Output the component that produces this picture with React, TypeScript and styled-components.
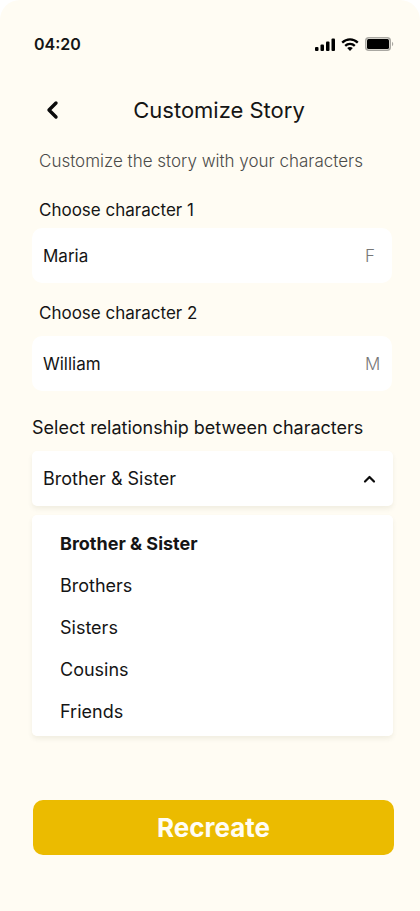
import React, { useState } from "react";
import styled, { createGlobalStyle } from "styled-components";

const GlobalStyle = createGlobalStyle`
  *, *::before, *::after { box-sizing: border-box; }
  body { margin: 0; background: #ffffff; }
  body, button, input, select { font-family: Inter, "Open Sans", sans-serif; color: #151515; }
`;

const Screen = styled.main`
  display: flex;
  flex-direction: column;
  min-height: 100vh;
  padding: 32px 26px 56px 32px;
  background: #fffcf3;
  border-radius: 20px 20px 0 0;
`;

const StatusBar = styled.div`
  display: flex;
  align-items: center;
  justify-content: space-between;
  height: 24px;
  padding-left: 2px;
`;

const Clock = styled.time`
  font-size: 16px;
  line-height: 24px;
  font-weight: 600;
`;

const StatusIcons = styled.div`
  display: flex;
  align-items: center;
  gap: 6px;
`;

const Header = styled.header`
  display: grid;
  grid-template-columns: 40px 1fr 28px;
  align-items: center;
  margin-top: 38px;
`;

const BackButton = styled.button`
  display: flex;
  align-items: center;
  justify-content: center;
  height: 32px;
  padding: 0;
  border: 0;
  background: none;
  cursor: pointer;
`;

const Title = styled.h1`
  margin: 0;
  font-size: 22px;
  line-height: 32px;
  font-weight: 400;
  text-align: center;
  white-space: nowrap;
`;

const Intro = styled.p`
  margin: 23px 0 0 7px;
  font-size: 17px;
  line-height: 24px;
  font-weight: 300;
  color: #4b4b49;
  white-space: nowrap;
`;

const Form = styled.form`
  display: flex;
  flex: 1;
  flex-direction: column;
  margin-top: 25px;
`;

const Field = styled.div<{ $gap: number }>`
  display: flex;
  flex-direction: column;
  gap: ${(p) => p.$gap}px;
  margin-bottom: 18px;
`;

const Relationship = styled(Field)`
  margin-top: 7px;
`;

const Label = styled.label<{ $inset?: boolean }>`
  padding-left: ${(p) => (p.$inset ? 7 : 0)}px;
  font-size: ${(p) => (p.$inset ? 17 : 18)}px;
  line-height: 24px;
  white-space: nowrap;
`;

const InputBox = styled.div`
  display: flex;
  align-items: center;
  height: 55px;
  margin-right: 2px;
  padding: 0 11px;
  background: #ffffff;
  border-radius: 10px;
`;

const NameInput = styled.input`
  flex: 1;
  min-width: 0;
  padding: 0;
  border: 0;
  background: none;
  font-size: 17px;
  line-height: 24px;
`;

const Gender = styled.span`
  width: 16px;
  font-size: 17px;
  line-height: 24px;
  font-weight: 300;
  color: #777777;
`;

const SelectBox = styled.div`
  display: grid;
  align-items: center;
  height: 55px;
  margin-right: 1px;
  background: #ffffff;
  border-radius: 5px;
  box-shadow: 0 3px 5px rgba(60, 50, 20, 0.07);

  > * { grid-area: 1 / 1; }
  > svg { justify-self: end; margin-right: 17px; pointer-events: none; }
`;

const Select = styled.select`
  appearance: none;
  width: 100%;
  height: 100%;
  padding: 0 40px 0 11px;
  border: 0;
  background: none;
  font-size: 18px;
`;

const Options = styled.fieldset`
  display: flex;
  flex-direction: column;
  min-width: 0;
  margin: -9px 1px 0 0;
  padding: 7px 28px 4px;
  border: 0;
  background: #ffffff;
  border-radius: 5px;
  box-shadow: 0 3px 5px rgba(60, 50, 20, 0.07);
`;

const Option = styled.label<{ $selected: boolean }>`
  display: flex;
  align-items: center;
  height: 42px;
  font-size: 18px;
  font-weight: ${(p) => (p.$selected ? 700 : 400)};
  cursor: pointer;
`;

const OptionRadio = styled.input`
  appearance: none;
  width: 0;
  height: 0;
  margin: 0;
`;

const Submit = styled.button`
  height: 55px;
  margin-top: auto;
  padding: 0;
  border: 0;
  border-radius: 10px;
  background: #ebbb00;
  color: #fffdf4;
  font-size: 26px;
  line-height: 32px;
  font-weight: 700;
  cursor: pointer;
  margin-left: 1px;
`;

const relationships = ["Brother & Sister", "Brothers", "Sisters", "Cousins", "Friends"];

const SignalIcon = () => (
  <svg width="20" height="13" viewBox="0 0 20 13" aria-hidden="true">
    <rect x="0" y="9" width="3.5" height="4" rx="1" />
    <rect x="5.5" y="6.5" width="3.5" height="6.5" rx="1" />
    <rect x="11" y="3.5" width="3.5" height="9.5" rx="1" />
    <rect x="16.5" y="0.5" width="3.5" height="12.5" rx="1" />
  </svg>
);

const WifiIcon = () => (
  <svg width="18" height="13" viewBox="0 0 18 13" aria-hidden="true">
    <path d="M1.2 4.6 C5.6 .3 12.4 .3 16.8 4.6 M4.2 7.8 C6.9 5.2 11.1 5.2 13.8 7.8" fill="none" stroke="#000" strokeWidth="2.3" />
    <path d="M6.2 10 C7.8 8.6 10.2 8.6 11.8 10 L9 12.9 Z" />
  </svg>
);

const BatteryIcon = () => (
  <svg width="29" height="14" viewBox="0 0 29 14" aria-hidden="true">
    <rect x="0.75" y="0.75" width="24.5" height="12.5" rx="3" fill="none" stroke="#aaa8a2" strokeWidth="1.5" />
    <rect x="2" y="2" width="22" height="10" rx="1.5" />
    <path d="M27 4.8 C28.7 5.5 28.7 8.5 27 9.2 Z" fill="#aaa8a2" />
  </svg>
);

interface CharacterFieldProps {
  id: string;
  label: string;
  name: string;
  gender: string;
  gap: number;
}

const CharacterField = ({ id, label, name, gender, gap }: CharacterFieldProps) => (
  <Field $gap={gap}>
    <Label htmlFor={id} $inset>{label}</Label>
    <InputBox>
      <NameInput id={id} type="text" defaultValue={name} />
      <Gender>{gender}</Gender>
    </InputBox>
  </Field>
);

export default function App() {
  const [relationship, setRelationship] = useState(relationships[0]);

  return (
    <>
      <GlobalStyle />
      <Screen>
        <StatusBar>
          <Clock>04:20</Clock>
          <StatusIcons>
            <SignalIcon />
            <WifiIcon />
            <BatteryIcon />
          </StatusIcons>
        </StatusBar>
        <Header>
          <BackButton type="button" aria-label="Back">
            <svg width="14" height="20" viewBox="0 0 14 20" fill="none" stroke="#0b0b0b" strokeWidth="3.4" strokeLinecap="round" strokeLinejoin="round">
              <path d="M11 3 L4 10 L11 17" />
            </svg>
          </BackButton>
          <Title>Customize Story</Title>
        </Header>
        <Intro>Customize the story with your characters</Intro>
        <Form onSubmit={(e) => e.preventDefault()}>
          <CharacterField id="character-1" label="Choose character 1" name="Maria" gender="F" gap={6} />
          <CharacterField id="character-2" label="Choose character 2" name="William" gender="M" gap={11} />
          <Relationship $gap={11}>
            <Label htmlFor="relationship">Select relationship between characters</Label>
            <SelectBox>
              <Select id="relationship" value={relationship} onChange={(e) => setRelationship(e.target.value)}>
                {relationships.map((item) => <option key={item}>{item}</option>)}
              </Select>
              <svg width="13" height="10" viewBox="0 0 13 10" fill="none" stroke="#0b0b0b" strokeWidth="2.2" strokeLinecap="round" strokeLinejoin="round" aria-hidden="true">
                <path d="M2 7.5 L6.5 3 L11 7.5" />
              </svg>
            </SelectBox>
          </Relationship>
          <Options aria-label="Relationship options">
            {relationships.map((item) => (
              <Option key={item} $selected={item === relationship}>
                <OptionRadio type="radio" name="relationship-option" checked={item === relationship} onChange={() => setRelationship(item)} />
                {item}
              </Option>
            ))}
          </Options>
          <Submit type="submit">Recreate</Submit>
        </Form>
      </Screen>
    </>
  );
}
